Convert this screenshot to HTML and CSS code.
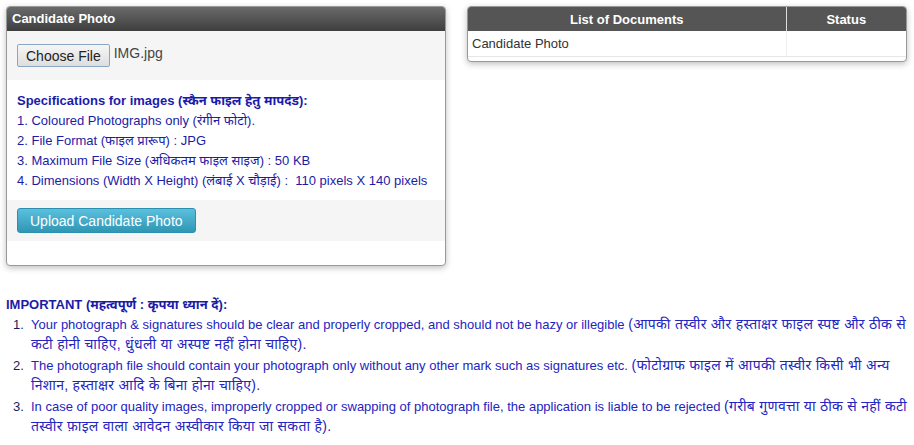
FILE: index.html
```html
<!DOCTYPE html>
<html lang="en">
<head>
  <meta charset="UTF-8">
  <title>Upload Photo</title>
  <link rel="stylesheet" href="styles.css">
</head>
<body>
<div class="top-row">
  <div class="panel photo-panel">
    <div class="panel-heading">Candidate Photo</div>
    <div class="file-row">
      <button class="choose-btn" type="button">Choose File</button>
      <span class="file-name">IMG.jpg</span>
    </div>
    <div class="specs">
      <div class="specs-title">Specifications for images (स्कैन फाइल हेतु मापदंड):</div>
      <div>1. Coloured Photographs only (रंगीन फोटो).</div>
      <div>2. File Format (फाइल प्रारूप) : JPG</div>
      <div>3. Maximum File Size (अधिकतम फाइल साइज) : 50 KB</div>
      <div>4. Dimensions (Width X Height) (लंबाई X चौड़ाई) : &nbsp;110 pixels X 140 pixels</div>
    </div>
    <div class="upload-row">
      <button class="upload-btn" type="button">Upload Candidate Photo</button>
    </div>
  </div>

  <div class="panel docs-panel">
    <table class="docs-table">
      <thead>
        <tr>
          <th class="col-doc">List of Documents</th>
          <th class="col-status">Status</th>
        </tr>
      </thead>
      <tbody>
        <tr>
          <td>Candidate Photo</td>
          <td></td>
        </tr>
      </tbody>
    </table>
  </div>
</div>

<div class="important">
  <div class="important-title">IMPORTANT (महत्वपूर्ण : कृपया ध्यान दें):</div>
  <ol>
    <li><p>Your photograph &amp; signatures should be clear and properly cropped, and should not be hazy or illegible <span class="hi">(आपकी तस्वीर और हस्ताक्षर फाइल स्पष्ट और ठीक से कटी होनी चाहिए, धुंधली या अस्पष्ट नहीं होना चाहिए).</span></p></li>
    <li><p>The photograph file should contain your photograph only without any other mark such as signatures etc. <span class="hi">(फोटोग्राफ फाइल में आपकी तस्वीर किसी भी अन्य निशान, हस्ताक्षर आदि के बिना होना चाहिए).</span></p></li>
    <li><p>In case of poor quality images, improperly cropped or swapping of photograph file, the application is liable to be rejected <span class="hi">(गरीब गुणवत्ता या ठीक से नहीं कटी तस्वीर फ़ाइल वाला आवेदन अस्वीकार किया जा सकता है).</span></p></li>
  </ol>
</div>
</body>
</html>
```

FILE: styles.css
```css
* {
  box-sizing: border-box;
}

body {
  margin: 0;
  padding: 6px 6px 0 6px;
  font-family: 'Liberation Sans', Arial, 'Noto Sans Devanagari', 'Noto Sans', sans-serif;
  font-size: 13px;
  color: #333;
  background: #fff;
}

.top-row {
  display: flex;
  align-items: flex-start;
  gap: 21px;
}

.panel {
  border: 1px solid #999;
  border-radius: 4px;
  box-shadow: 0 2px 6px rgba(0, 0, 0, 0.25);
  background: #fff;
  overflow: hidden;
}

.photo-panel {
  width: 440px;
  padding-bottom: 24px;
}

.panel-heading {
  height: 24px;
  padding: 4px 5px 0;
  color: #fff;
  font-weight: bold;
  font-size: 13px;
  background: linear-gradient(to bottom, #6a6a6a, #3e3e3e);
}

.file-row {
  display: flex;
  align-items: flex-start;
  gap: 4px;
  background: #f5f5f5;
  padding: 13px 10px 13px 10px;
}

.choose-btn {
  font-family: 'Liberation Sans', Arial, sans-serif;
  font-size: 14px;
  color: #222;
  height: 23px;
  padding: 0 8px;
  border: 1px solid #8aa6c5;
  border-radius: 2px;
  background: linear-gradient(to bottom, #f6f6f6, #dedede);
}

.file-name {
  font-size: 14px;
  color: #444;
  padding-top: 1px;
}

.specs {
  padding: 11px 10px 9px;
  color: #1b1ba6;
  line-height: 20px;
}

.specs-title {
  font-weight: bold;
  color: #1b1baa;
}

.upload-row {
  background: #f5f5f5;
  padding: 8px 10px 8px;
}

.upload-btn {
  font-family: 'Liberation Sans', Arial, sans-serif;
  font-size: 14px;
  color: #fff;
  height: 25px;
  padding: 0 12px;
  border: 1px solid #2b8fb0;
  border-radius: 3px;
  background: linear-gradient(to bottom, #5bc0de, #2f96b4);
}

.docs-panel {
  width: 440px;
  padding-bottom: 4px;
}

.docs-table {
  width: 100%;
  border-collapse: collapse;
}

.docs-table th {
  background: #555;
  color: #fff;
  font-weight: bold;
  font-size: 13px;
  height: 24px;
  text-align: center;
}

.docs-table .col-doc {
  width: 318px;
  border-right: 1px solid #ddd;
}

.docs-table td {
  height: 25px;
  padding: 0 4px;
  border-bottom: 1px solid #e6e6e6;
  color: #333;
}

.docs-table td + td {
  border-left: 1px solid #eee;
}

.important {
  margin-top: 29px;
  color: #2424c0;
  line-height: 20px;
}

.important-title {
  font-weight: bold;
  color: #1b1ba6;
}

.important ol {
  margin: 0;
  padding: 0 0 0 7px;
  list-style: none;
  counter-reset: item;
}

.important li {
  display: flex;
  align-items: baseline;
  counter-increment: item;
  margin-bottom: 1px;
}

.important li::before {
  content: counter(item) ".";
  flex: 0 0 18px;
  color: #1c1c5c;
}

.important li p {
  margin: 0;
  flex: 1;
}

.important .hi {
  font-size: 14px;
  line-height: 14px;
  letter-spacing: 0.3px;
}
```
